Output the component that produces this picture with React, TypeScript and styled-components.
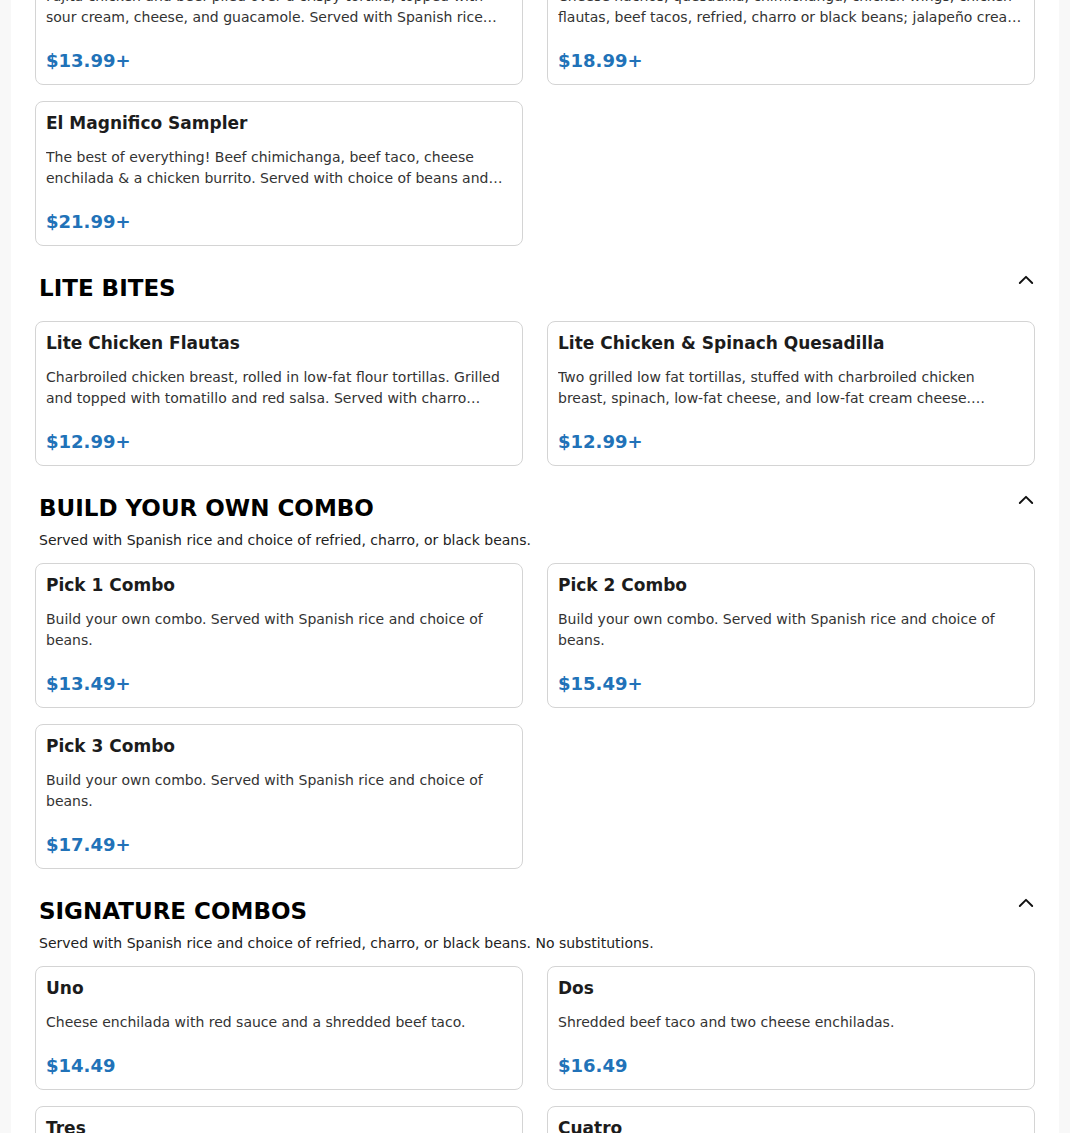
import React from "react";
import styled, { createGlobalStyle } from "styled-components";

const GlobalStyle = createGlobalStyle`
  body {
    margin: 0;
    background: #f8f8f8;
    font-family: "DejaVu Sans", "Noto Sans", sans-serif;
    color: #222;
  }
  * { box-sizing: border-box; }
`;

const Page = styled.div`
  padding: 0 11px;
  height: 1133px;
  overflow: hidden;
`;

const Sheet = styled.main`
  background: #fff;
  padding: 0 24px 40px;
  margin-top: -135px;
`;

const Section = styled.section`
  padding-top: 28px;
`;

const SectionHeader = styled.header`
  display: flex;
  justify-content: space-between;
  align-items: flex-start;
  padding-left: 4px;
  margin-bottom: 8px;
`;

const SectionTitle = styled.h2`
  margin: 0;
  font-size: 23px;
  line-height: 28px;
  font-weight: 700;
  color: #000;
`;

const Toggle = styled.button`
  display: flex;
  align-items: center;
  justify-content: center;
  width: 16px;
  height: 16px;
  margin-right: 1px;
  padding: 0;
  border: none;
  background: none;
  color: #111;
  cursor: pointer;
`;

const SectionNote = styled.p`
  margin: 0;
  padding-left: 4px;
  font-size: 14px;
  line-height: 21px;
  color: #222;
`;

const Grid = styled.div<{ $afterNote?: boolean }>`
  display: grid;
  grid-template-columns: 1fr 1fr;
  column-gap: 24px;
  row-gap: 16px;
  margin-top: ${({ $afterNote }) => ($afterNote ? "12px" : "19px")};
`;

const Card = styled.article`
  border: 1px solid #d4d4d4;
  border-radius: 8px;
  padding: 11px 10px 10px;
  background: #fff;
`;

const ItemName = styled.h3`
  margin: 0;
  font-size: 17px;
  line-height: 20px;
  font-weight: 700;
  color: #1c1c1c;
`;

const ItemDesc = styled.p`
  margin: 14px 0 0;
  font-size: 14px;
  line-height: 21px;
  color: #333;
  display: -webkit-box;
  -webkit-line-clamp: 2;
  -webkit-box-orient: vertical;
  overflow: hidden;
`;

const Price = styled.div`
  margin-top: 19px;
  font-size: 18px;
  line-height: 27px;
  font-weight: 700;
  color: #2172b8;
`;

type Item = { name: string; desc: string; price: string };
type Group = { title: string; note?: string; items: Item[] };

const menu: Group[] = [
  {
    title: "PLATTERS",
    items: [
      {
        name: "Fajita Nachos",
        desc: "Fajita chicken and beef piled over a crispy tortilla, topped with sour cream, cheese, and guacamole. Served with Spanish rice and refried beans.",
        price: "$13.99+",
      },
      {
        name: "Fiesta Platter",
        desc: "Cheese nachos, quesadilla, chimichanga, chicken wings, chicken flautas, beef tacos, refried, charro or black beans; jalapeño cream cheese dip.",
        price: "$18.99+",
      },
      {
        name: "El Magnifico Sampler",
        desc: "The best of everything! Beef chimichanga, beef taco, cheese enchilada & a chicken burrito. Served with choice of beans and Spanish rice.",
        price: "$21.99+",
      },
    ],
  },
  {
    title: "LITE BITES",
    items: [
      {
        name: "Lite Chicken Flautas",
        desc: "Charbroiled chicken breast, rolled in low-fat flour tortillas. Grilled and topped with tomatillo and red salsa. Served with charro beans and a side salad.",
        price: "$12.99+",
      },
      {
        name: "Lite Chicken & Spinach Quesadilla",
        desc: "Two grilled low fat tortillas, stuffed with charbroiled chicken breast, spinach, low-fat cheese, and low-fat cream cheese. Served with pico de gallo.",
        price: "$12.99+",
      },
    ],
  },
  {
    title: "BUILD YOUR OWN COMBO",
    note: "Served with Spanish rice and choice of refried, charro, or black beans.",
    items: [
      {
        name: "Pick 1 Combo",
        desc: "Build your own combo. Served with Spanish rice and choice of beans.",
        price: "$13.49+",
      },
      {
        name: "Pick 2 Combo",
        desc: "Build your own combo. Served with Spanish rice and choice of beans.",
        price: "$15.49+",
      },
      {
        name: "Pick 3 Combo",
        desc: "Build your own combo. Served with Spanish rice and choice of beans.",
        price: "$17.49+",
      },
    ],
  },
  {
    title: "SIGNATURE COMBOS",
    note: "Served with Spanish rice and choice of refried, charro, or black beans. No substitutions.",
    items: [
      {
        name: "Uno",
        desc: "Cheese enchilada with red sauce and a shredded beef taco.",
        price: "$14.49",
      },
      {
        name: "Dos",
        desc: "Shredded beef taco and two cheese enchiladas.",
        price: "$16.49",
      },
      {
        name: "Tres",
        desc: "Cheese enchilada, shredded beef taco and a bean chalupa.",
        price: "$17.49",
      },
      {
        name: "Cuatro",
        desc: "Two cheese enchiladas, shredded beef taco and a bean chalupa.",
        price: "$18.49",
      },
    ],
  },
];

const ChevronUp = () => (
  <svg width="16" height="16" viewBox="0 0 16 16" fill="none">
    <polyline
      points="1.8,9 8,2.8 14.2,9"
      stroke="currentColor"
      strokeWidth="1.9"
      strokeLinecap="round"
      strokeLinejoin="round"
    />
  </svg>
);

const MenuSection = ({ group }: { group: Group }) => (
  <Section>
    <SectionHeader>
      <SectionTitle>{group.title}</SectionTitle>
      <Toggle aria-label="Collapse section">
        <ChevronUp />
      </Toggle>
    </SectionHeader>
    {group.note && <SectionNote>{group.note}</SectionNote>}
    <Grid $afterNote={!!group.note}>
      {group.items.map((item) => (
        <Card key={item.name}>
          <ItemName>{item.name}</ItemName>
          <ItemDesc>{item.desc}</ItemDesc>
          <Price>{item.price}</Price>
        </Card>
      ))}
    </Grid>
  </Section>
);

export default function App() {
  return (
    <Page>
      <GlobalStyle />
      <Sheet>
        {menu.map((group) => (
          <MenuSection key={group.title} group={group} />
        ))}
      </Sheet>
    </Page>
  );
}
